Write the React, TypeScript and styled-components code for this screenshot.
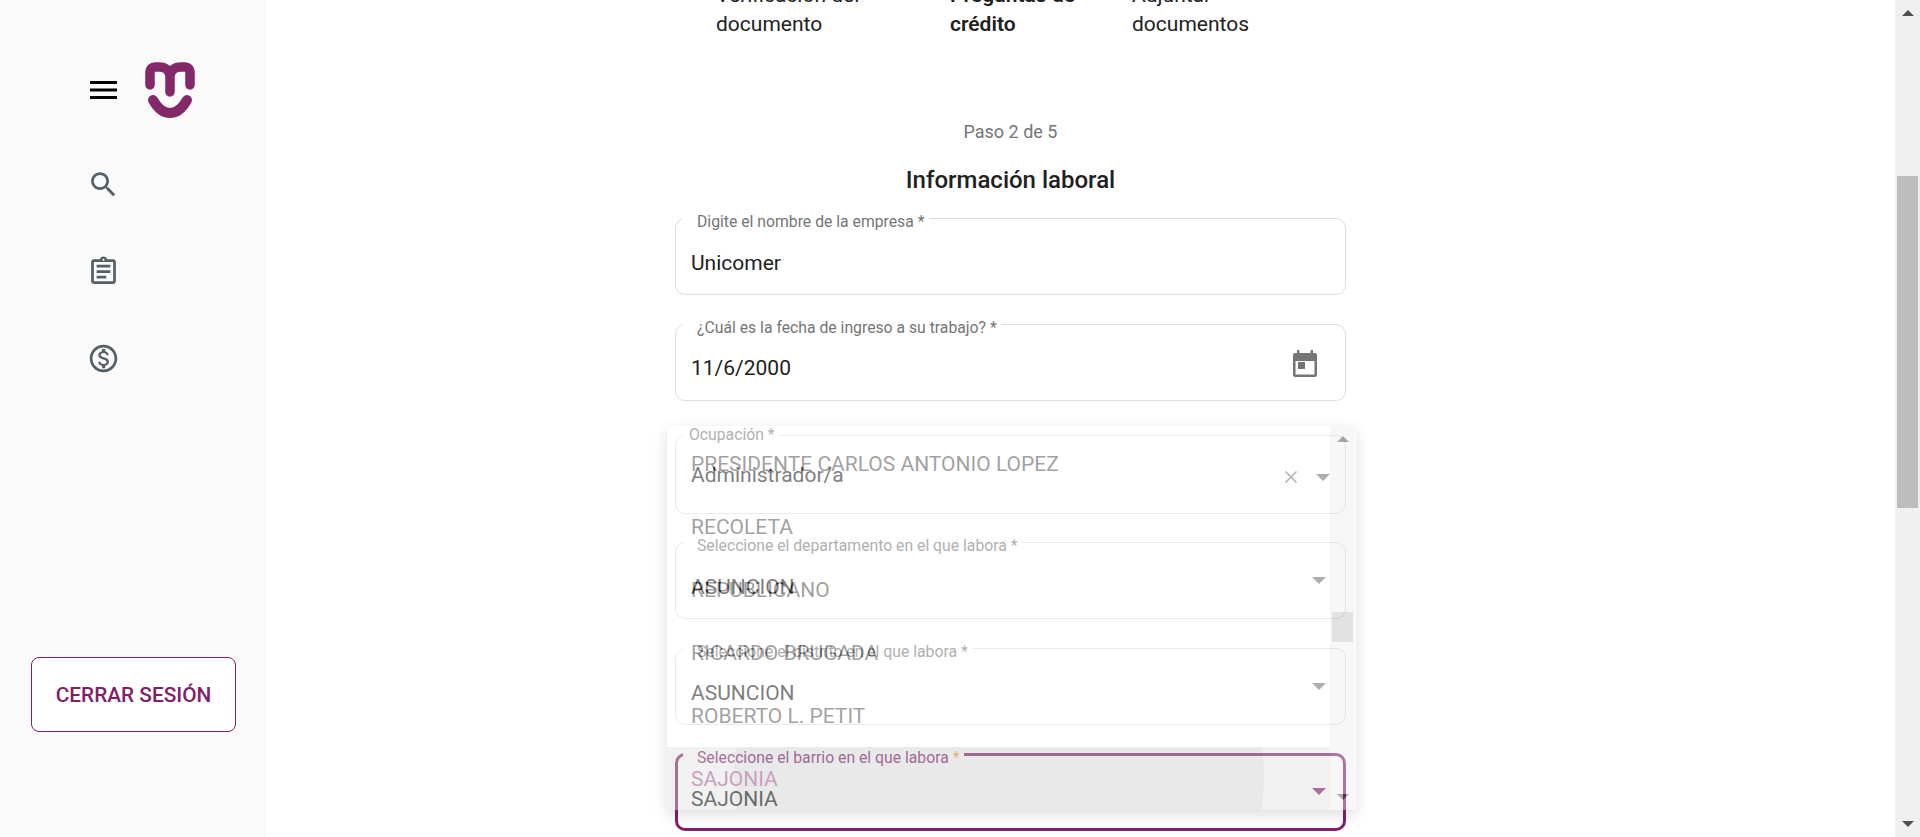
import React from "react";
import styled, { createGlobalStyle } from "styled-components";

const PURPLE = "#7f2068";

const GlobalStyle = createGlobalStyle`
  html, body {
    margin: 0;
    padding: 0;
    height: 100%;
    overflow: hidden;
    background: #fff;
    font-family: Roboto, "Liberation Sans", sans-serif;
  }
  * { box-sizing: border-box; }
`;

const Page = styled.div`
  display: flex;
  width: 1920px;
  height: 837px;
  overflow: hidden;
`;

const Sidebar = styled.aside`
  display: flex;
  flex-direction: column;
  flex: 0 0 267px;
  height: 100%;
  padding: 62px 31px 0 31px;
  background: #fafafa;
`;

const Brand = styled.div`
  display: flex;
  align-items: center;
  gap: 28px;
  height: 56px;
  padding-left: 59px;
`;

const NavList = styled.nav`
  display: flex;
  flex-direction: column;
  gap: 54px;
  margin-top: 50px;
  padding-left: 56px;
`;

const NavIcon = styled.svg`
  display: block;
  width: 33px;
  height: 33px;
  fill: #546067;
`;

const LogoutButton = styled.button`
  width: 205px;
  height: 75px;
  margin-top: auto;
  margin-bottom: 105px;
  border: 1px solid ${PURPLE};
  border-radius: 8px;
  background: #fff;
  color: ${PURPLE};
  font: 500 20.8px Roboto, sans-serif;
`;

const Main = styled.main`
  flex: 1;
  min-width: 0;
  padding-left: 408px;
`;

const PageScrollbar = styled.div`
  display: flex;
  flex-direction: column;
  align-items: center;
  flex: 0 0 25px;
  height: 100%;
  padding-top: 10px;
  background: #f0f0f0;
`;

const PageThumb = styled.div`
  width: 21px;
  height: 332px;
  margin-top: 160px;
  background: #bdbdbd;
`;

const Arrow = styled.i<{ $down?: boolean; $color: string; $size: number }>`
  display: block;
  width: 0;
  height: 0;
  border-left: ${({ $size }) => $size}px solid transparent;
  border-right: ${({ $size }) => $size}px solid transparent;
  ${({ $down, $color, $size }) =>
    $down
      ? `border-top: ${$size}px solid ${$color};`
      : `border-bottom: ${$size}px solid ${$color};`}
`;

const ScrollArrowDown = styled.div`
  margin-top: auto;
  margin-bottom: 10px;
`;

const Stepper = styled.div`
  display: flex;
  align-items: flex-end;
  height: 39px;
  padding-left: 41px;
  overflow: hidden;
`;

const Step = styled.div<{ $width: number; $active?: boolean }>`
  flex: 0 0 ${({ $width }) => $width}px;
  color: #212121;
  font-size: 21px;
  font-weight: ${({ $active }) => ($active ? 600 : 400)};
  line-height: 29px;
  white-space: nowrap;
`;

const FormArea = styled.section`
  position: relative;
  width: 671px;
`;

const StepCount = styled.p`
  margin: 81px 0 0;
  color: #757575;
  font-size: 18px;
  line-height: 24px;
  text-align: center;
`;

const Title = styled.h1`
  margin: 20px 0 0;
  color: #212121;
  font-size: 24px;
  font-weight: 500;
  line-height: 32px;
  text-align: center;
`;

const Fields = styled.div`
  display: flex;
  flex-direction: column;
  margin-top: 9px;
`;

const Field = styled.fieldset<{ $focused?: boolean; $gap?: number; $height?: number }>`
  display: flex;
  align-items: flex-start;
  flex: 0 0 ${({ $height }) => $height ?? 90}px;
  min-width: 0;
  margin: 0 0 ${({ $gap }) => $gap ?? 16}px;
  padding: 0;
  border: ${({ $focused }) => ($focused ? `3px solid ${PURPLE}` : "1px solid #dcdcdc")};
  border-radius: 10px;
`;

const Legend = styled.legend<{ $focused?: boolean; $floating?: boolean }>`
  margin-left: ${({ $focused }) => ($focused ? 5 : 7)}px;
  padding: ${({ $floating }) => ($floating ? "0 4px 0 6px" : "8px 4px 0 14px")};
  color: ${({ $focused }) => ($focused ? PURPLE : "#757575")};
  font-size: 15.75px;
  line-height: 18px;
`;

const Star = styled.span`
  color: #e8a33d;
`;

const FieldValue = styled.div<{ $top?: number; $left?: number }>`
  flex: 1;
  margin: ${({ $top }) => $top ?? 20}px 0 0 ${({ $left }) => $left ?? 15}px;
  color: #212121;
  font-size: 21px;
  line-height: 24px;
`;

const Adornment = styled.div<{ $top?: number; $right?: number }>`
  display: flex;
  align-items: center;
  gap: 19px;
  margin-top: ${({ $top }) => $top ?? 22}px;
  margin-right: ${({ $right }) => $right ?? 19}px;
`;

const ClearIcon = styled.svg`
  display: block;
  width: 12px;
  height: 12px;
  stroke: #757575;
  stroke-width: 1.5;
`;

const CalendarIcon = styled.svg`
  display: block;
  width: 24px;
  height: 27px;
`;

const Popup = styled.div`
  position: absolute;
  top: 426px;
  left: -8px;
  display: flex;
  width: 689px;
  height: 384px;
  overflow: hidden;
  border-radius: 4px;
  background: #fff;
  box-shadow: 0 5px 14px rgba(0, 0, 0, 0.3);
  opacity: 0.42;
`;

const OptionList = styled.ul`
  display: flex;
  flex-direction: column;
  flex: 1;
  margin: 0;
  padding: 6px 0 0;
  list-style: none;
`;

const Option = styled.li<{ $selected?: boolean }>`
  position: relative;
  display: flex;
  align-items: center;
  flex: 0 0 63px;
  overflow: hidden;
  padding: 0 24px;
  background: ${({ $selected }) => ($selected ? "#dedede" : "transparent")};
  color: ${({ $selected }) => ($selected ? PURPLE : "#212121")};
  font-size: 21px;
  line-height: 24px;
  white-space: nowrap;
`;

const Ripple = styled.span`
  position: absolute;
  top: -210px;
  left: 67px;
  width: 530px;
  height: 480px;
  border-radius: 50%;
  background: rgba(0, 0, 0, 0.08);
`;

const OptionText = styled.span`
  position: relative;
`;

const PopupScrollbar = styled.div`
  display: flex;
  flex-direction: column;
  align-items: center;
  flex: 0 0 25px;
  padding-top: 10px;
  margin-right: 1px;
  background: #eeeeee;
`;

const PopupThumb = styled.div`
  width: 21px;
  height: 30px;
  margin-top: 170px;
  background: #bcbcbc;
`;

const options = [
  "PRESIDENTE CARLOS ANTONIO LOPEZ",
  "RECOLETA",
  "REPUBLICANO",
  "RICARDO BRUGADA",
  "ROBERTO L. PETIT",
  "SAJONIA",
];

function DropArrow() {
  return <Arrow $down $color="#757575" $size={7} />;
}

export default function App() {
  return (
    <Page>
      <GlobalStyle />

      <Sidebar>
        <Brand>
          <svg width="27" height="18" viewBox="0 0 27 18">
            <rect width="27" height="3" />
            <rect y="7.5" width="27" height="3" />
            <rect y="15" width="27" height="3" />
          </svg>
          <svg width="50" height="56" viewBox="0 0 50 56" fill="none" stroke="#832868" strokeLinecap="round">
            <path strokeWidth="9.5" d="M5 23V10C5 7 7 5 10 5H14C20 5 25 8 25 15V30M25 15C25 8 30 5 36 5H40C43 5 45 7 45 10V23" />
            <path strokeWidth="10" d="M8 38C13 47 19 51 25 51C31 51 37 47 42 38" />
          </svg>
        </Brand>

        <NavList>
          <NavIcon viewBox="0 0 24 24">
            <path d="M15.5 14h-.79l-.28-.27C15.41 12.59 16 11.11 16 9.5 16 5.91 13.09 3 9.5 3S3 5.91 3 9.5 5.91 16 9.5 16c1.61 0 3.09-.59 4.23-1.57l.27.28v.79l5 4.99L20.49 19l-4.99-5zm-6 0C7.01 14 5 11.99 5 9.5S7.01 5 9.5 5 14 7.01 14 9.5 11.99 14 9.5 14z" />
          </NavIcon>
          <NavIcon viewBox="0 0 24 24">
            <path d="M7 15h7v2H7zm0-4h10v2H7zm0-4h10v2H7zm12-4h-4.18C14.4 1.84 13.3 1 12 1c-1.3 0-2.4.84-2.82 2H5c-.14 0-.27.01-.4.04-.39.08-.74.28-1.01.55-.18.18-.33.4-.43.64-.1.23-.16.49-.16.77v14c0 .27.06.54.16.78s.25.45.43.64c.27.27.62.47 1.01.55.13.02.26.03.4.03h14c1.1 0 2-.9 2-2V5c0-1.1-.9-2-2-2zm-7-.25c.41 0 .75.34.75.75s-.34.75-.75.75-.75-.34-.75-.75.34-.75.75-.75zM19 19H5V5h14v14z" />
          </NavIcon>
          <NavIcon viewBox="0 0 24 24">
            <path d="M12 2C6.48 2 2 6.48 2 12s4.48 10 10 10 10-4.48 10-10S17.52 2 12 2zm0 18c-4.41 0-8-3.59-8-8s3.59-8 8-8 8 3.59 8 8-3.59 8-8 8zm.31-8.86c-1.77-.45-2.34-.94-2.34-1.67 0-.84.79-1.43 2.1-1.43 1.38 0 1.9.66 1.94 1.64h1.71c-.05-1.34-.87-2.57-2.49-2.97V5H10.9v1.69c-1.51.32-2.72 1.3-2.72 2.81 0 1.79 1.49 2.69 3.66 3.21 1.95.46 2.34 1.15 2.34 1.87 0 .53-.39 1.39-2.1 1.39-1.6 0-2.23-.72-2.32-1.64H8.04c.1 1.7 1.36 2.66 2.86 2.97V19h2.34v-1.67c1.52-.29 2.72-1.16 2.73-2.77-.01-2.2-1.9-2.96-3.66-3.42z" />
          </NavIcon>
        </NavList>

        <LogoutButton>CERRAR SESIÓN</LogoutButton>
      </Sidebar>

      <Main>
        <FormArea>
          <Stepper>
            <Step $width={234}>
              Verificación del
              <br />
              documento
            </Step>
            <Step $width={182} $active>
              Preguntas de
              <br />
              crédito
            </Step>
            <Step $width={150}>
              Adjuntar
              <br />
              documentos
            </Step>
          </Stepper>

          <StepCount>Paso 2 de 5</StepCount>
          <Title>Información laboral</Title>

          <Fields>
            <Field>
              <Legend>Digite el nombre de la empresa *</Legend>
              <FieldValue>Unicomer</FieldValue>
            </Field>
            <Field $gap={25}>
              <Legend>¿Cuál es la fecha de ingreso a su trabajo? *</Legend>
              <FieldValue $top={19}>11/6/2000</FieldValue>
              <Adornment $top={13} $right={28}>
                <CalendarIcon viewBox="0 0 24 27">
                  <rect x="4" y="0" width="2.4" height="4" fill="#757575" />
                  <rect x="17.6" y="0" width="2.4" height="4" fill="#757575" />
                  <path fill="#757575" fillRule="evenodd" d="M2 3h20a2 2 0 0 1 2 2v20a2 2 0 0 1-2 2H2a2 2 0 0 1-2-2V5a2 2 0 0 1 2-2zm.5 8v13.5h19V11z" />
                  <rect x="5" y="12" width="7" height="7" fill="#757575" />
                </CalendarIcon>
              </Adornment>
            </Field>
            <Field $height={88} $gap={15}>
              <Legend $floating>Ocupación *</Legend>
              <FieldValue $top={19}>Administrador/a</FieldValue>
              <Adornment $top={27} $right={15}>
                <ClearIcon viewBox="0 0 12 12">
                  <path d="M0.5 0.5l11 11M11.5 0.5l-11 11" />
                </ClearIcon>
                <DropArrow />
              </Adornment>
            </Field>
            <Field>
              <Legend>Seleccione el departamento en el que labora *</Legend>
              <FieldValue>ASUNCION</FieldValue>
              <Adornment>
                <DropArrow />
              </Adornment>
            </Field>
            <Field>
              <Legend>Seleccione el distrito en el que labora *</Legend>
              <FieldValue>ASUNCION</FieldValue>
              <Adornment>
                <DropArrow />
              </Adornment>
            </Field>
            <Field $focused $gap={0}>
              <Legend $focused>
                Seleccione el barrio en el que labora <Star>*</Star>
              </Legend>
              <FieldValue $left={13}>SAJONIA</FieldValue>
              <Adornment $top={21} $right={17}>
                <Arrow $down $color={PURPLE} $size={7} />
              </Adornment>
            </Field>
          </Fields>

          <Popup>
            <OptionList>
              {options.map((name) => (
                <Option key={name} $selected={name === "SAJONIA"}>
                  {name === "SAJONIA" && <Ripple />}
                  <OptionText>{name}</OptionText>
                </Option>
              ))}
            </OptionList>
            <PopupScrollbar>
              <Arrow $color="#333333" $size={6} />
              <PopupThumb />
              <ScrollArrowDown>
                <Arrow $down $color="#333333" $size={6} />
              </ScrollArrowDown>
            </PopupScrollbar>
          </Popup>
        </FormArea>
      </Main>

      <PageScrollbar>
        <Arrow $color="#505050" $size={6} />
        <PageThumb />
        <ScrollArrowDown>
          <Arrow $down $color="#505050" $size={6} />
        </ScrollArrowDown>
      </PageScrollbar>
    </Page>
  );
}
